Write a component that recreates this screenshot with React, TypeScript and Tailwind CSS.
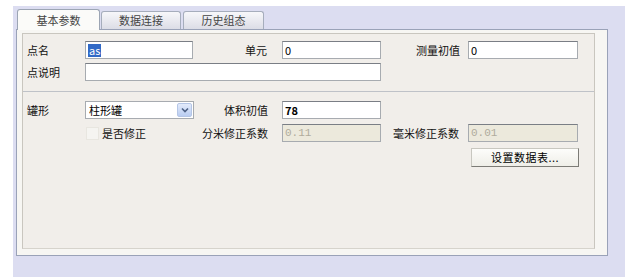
import React from "react";

const font = { fontFamily: '"Noto Sans CJK SC", "Liberation Sans", sans-serif' };

function TextBox({
  value,
  width,
  bold,
  disabled,
  selected,
}: {
  value: string;
  width: string;
  bold?: boolean;
  disabled?: boolean;
  selected?: boolean;
}) {
  return (
    <div
      className={`${width} h-[18px] border border-[#a7abb0] border-t-[#7a7e85] flex items-center pl-[2px] text-[11px] leading-none ${
        disabled ? "bg-[#ece9dc] text-[#b0ac9c]" : "bg-white text-black"
      } ${bold ? "font-bold" : ""}`}
      style={disabled ? { fontFamily: '"Liberation Mono", monospace' } : undefined}
    >
      {selected ? (
        <span className="bg-[#3169c6] text-white px-[1px] h-[13px] flex items-center">{value}</span>
      ) : (
        value
      )}
    </div>
  );
}

function Label({ text, className = "" }: { text: string; className?: string }) {
  return <div className={`text-[11px] text-[#111] leading-none ${className}`}>{text}</div>;
}

export default function App() {
  return (
    <div className="w-[629px] h-[280px] bg-white pl-[13px] pt-[6px] pr-[4px] pb-[3px]" style={font}>
      <div className="w-full h-full bg-[#dcddf1] pl-[3px] pt-[3px]">
        {/* tabs */}
        <div className="flex items-end h-[20px] ml-[1px]">
          <div className="w-[83px] h-[21px] bg-[#fbfbf9] border border-b-0 border-[#9ca5b4] rounded-t-[3px] flex items-center justify-center text-[11px] text-[#444] relative z-10 -mb-[1px]">
            基本参数
          </div>
          <div className="w-[80px] h-[18px] ml-[1px] bg-gradient-to-b from-[#f7f7fa] to-[#dcdde6] border border-b-0 border-[#a6adbc] rounded-t-[3px] flex items-center justify-center text-[11px] text-[#444]">
            数据连接
          </div>
          <div className="w-[81px] h-[18px] ml-[2px] bg-gradient-to-b from-[#f7f7fa] to-[#dcdde6] border border-b-0 border-[#a6adbc] rounded-t-[3px] flex items-center justify-center text-[11px] text-[#444]">
            历史组态
          </div>
        </div>
        {/* panel */}
        <div className="w-[592px] h-[227px] border border-[#9aa2b8] bg-[#f7f6f3] pl-[5px] pt-[3px] pr-[12px] pb-[6px]">
          <div className="w-full h-full bg-[#f1eeea] border border-[#c9c6bf] border-b-[#d6d3cc] flex flex-col">
            {/* top section */}
            <div className="h-[58px] border-b border-[#bfc2c8] pt-[7px] pl-[4px]">
              <div className="flex items-center h-[18px]">
                <Label text="点名" className="w-[58px]" />
                <TextBox value="as" width="w-[108px]" selected />
                <Label text="单元" className="w-[89px] text-right pr-[15px]" />
                <TextBox value="0" width="w-[99px]" />
                <Label text="测量初值" className="w-[87px] text-right pr-[8px]" />
                <TextBox value="0" width="w-[110px]" />
              </div>
              <div className="flex items-center h-[18px] mt-[4px]">
                <Label text="点说明" className="w-[58px]" />
                <TextBox value="" width="w-[296px]" />
              </div>
            </div>
            {/* bottom section */}
            <div className="pt-[9px] pl-[4px]">
              <div className="flex items-center h-[18px]">
                <Label text="罐形" className="w-[58px]" />
                <div className="w-[109px] h-[18px] bg-white border border-[#a7abb0] flex items-center justify-between pl-[3px] pr-[1px]">
                  <span className="text-[11px] leading-none">柱形罐</span>
                  <div className="w-[15px] h-[14px] rounded-[2px] bg-gradient-to-b from-[#e3ebfb] to-[#b9cdf1] border border-[#b5c6e6] flex items-center justify-center">
                    <svg width="8" height="6" viewBox="0 0 8 6">
                      <path d="M1 1.5 L4 4.5 L7 1.5" fill="none" stroke="#4d6185" strokeWidth="1.6" />
                    </svg>
                  </div>
                </div>
                <Label text="体积初值" className="w-[88px] text-right pr-[14px]" />
                <TextBox value="78" width="w-[99px]" bold />
              </div>
              <div className="flex items-center h-[18px] mt-[5px]">
                <div className="w-[58px]" />
                <div className="w-[109px] flex items-center">
                  <div className="w-[13px] h-[13px] ml-[1px] border border-[#e8e6e0] bg-[#f5f4f1]" />
                  <Label text="是否修正" className="ml-[3px]" />
                </div>
                <Label text="分米修正系数" className="w-[88px] text-right pr-[14px]" />
                <TextBox value="0.11" width="w-[99px]" disabled />
                <Label text="毫米修正系数" className="w-[87px] text-right pr-[9px]" />
                <TextBox value="0.01" width="w-[110px]" disabled />
              </div>
              <div className="flex mt-[6px]">
                <div className="ml-[444px] w-[108px] h-[19px] bg-gradient-to-b from-[#fdfdfb] to-[#efeee8] border border-[#c8c7c0] border-r-[#7c7b76] border-b-[#7c7b76] flex items-center justify-center text-[11px] leading-none tracking-[0.5px]">
                  设置数据表...
                </div>
              </div>
            </div>
          </div>
        </div>
      </div>
    </div>
  );
}
